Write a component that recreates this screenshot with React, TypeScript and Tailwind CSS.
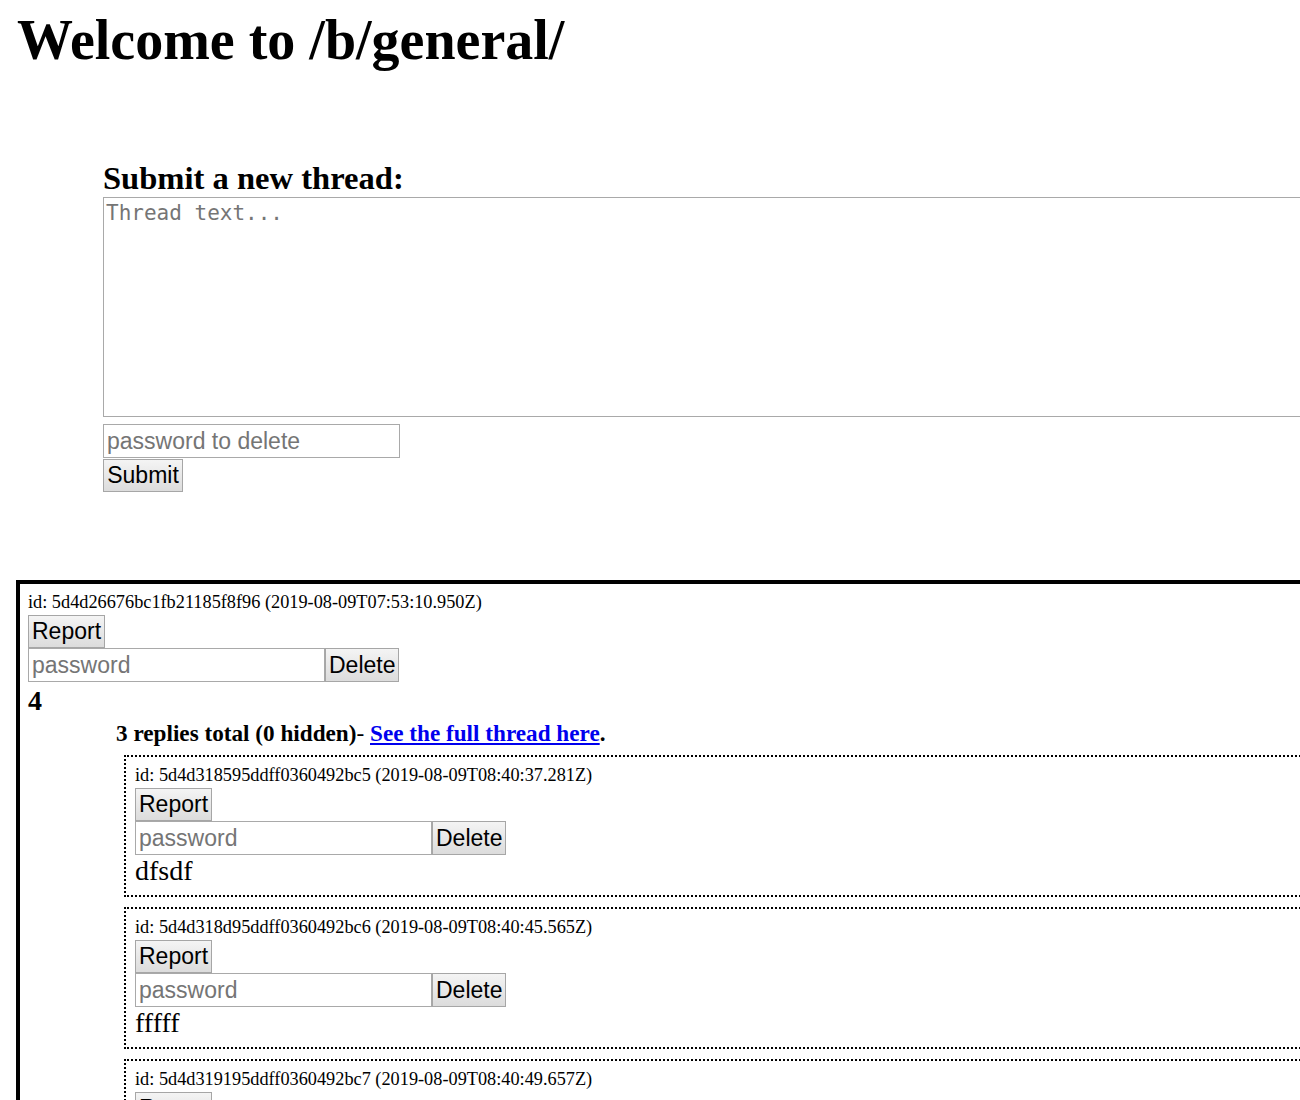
import React from 'react';

type Reply = { id: string; date: string; text: string };

const replies: Reply[] = [
  { id: '5d4d318595ddff0360492bc5', date: '2019-08-09T08:40:37.281Z', text: 'dfsdf' },
  { id: '5d4d318d95ddff0360492bc6', date: '2019-08-09T08:40:45.565Z', text: 'fffff' },
  { id: '5d4d319195ddff0360492bc7', date: '2019-08-09T08:40:49.657Z', text: 'sdfsdf' },
];

const btn =
  "block h-[33px] px-[3px] border border-[#a6a6a6] bg-linear-to-b from-[#f4f4f4] to-[#dcdcdc] text-[23px] leading-none text-black font-['Liberation_Sans',Arial,sans-serif]";

const pwInput =
  "block h-[34px] px-[3px] border border-[#a9a9a9] bg-white text-[23px] font-['Liberation_Sans',Arial,sans-serif] placeholder:text-[#757575] outline-none";

const PostControls: React.FC = () => (
  <>
    <button className={`${btn} w-[77px]`}>Report</button>
    <div className="flex">
      <input type="password" placeholder="password" className={`${pwInput} w-[297px]`} />
      <button className={`${btn} w-[74px] h-[34px]`}>Delete</button>
    </div>
  </>
);

const App: React.FC = () => {
  return (
    <div className="w-full min-h-[1100px] overflow-hidden bg-white text-black font-['Liberation_Serif','Times_New_Roman',serif]">
      <h1 className="mt-[8px] ml-[17px] text-[56px] leading-[64px] font-bold">Welcome to /b/general/</h1>

      <form className="ml-[103px] mt-[88px]" onSubmit={(e) => e.preventDefault()}>
        <h3 className="text-[32.6px] leading-[36px] font-bold">Submit a new thread:</h3>
        <textarea
          placeholder="Thread text..."
          className="block mt-px w-[1300px] h-[220px] px-[2px] pt-0 border border-[#a9a9a9] resize-none outline-none font-['DejaVu_Sans_Mono',monospace] text-[21px] placeholder:text-[#757575]"
        />
        <input type="text" placeholder="password to delete" className={`${pwInput} mt-[7px] w-[297px]`} />
        <button type="submit" className={`${btn} mt-px w-[80px]`}>Submit</button>
      </form>

      <div className="mt-[88px] ml-[16px] w-[1400px] border-[4px] border-black pl-[8px] pb-[10px]">
        <p className="pt-[6px] text-[18.3px] leading-[25px]">id: 5d4d26676bc1fb21185f8f96 (2019-08-09T07:53:10.950Z)</p>
        <PostControls />
        <h3 className="mt-[3px] text-[28px] leading-[32px] font-bold">4</h3>
        <div className="ml-[88px] pt-[2px] text-[23.2px] leading-[28px] font-bold">
          3 replies total (0 hidden)<span className="font-normal">- </span>
          <a href="#" className="text-[#0000ee] underline">See the full thread here</a>.
        </div>
        <div className="ml-[96px] mt-[8px]">
          {replies.map((r) => (
            <div key={r.id} className="mb-[10px] border-2 border-dotted border-black pl-[9px] pt-[6px] pb-[8px]">
              <p className="text-[18.3px] leading-[25px]">id: {r.id} ({r.date})</p>
              <PostControls />
              <p className="text-[28px] leading-[32px]">{r.text}</p>
            </div>
          ))}
        </div>
      </div>
    </div>
  );
};

export default App;
